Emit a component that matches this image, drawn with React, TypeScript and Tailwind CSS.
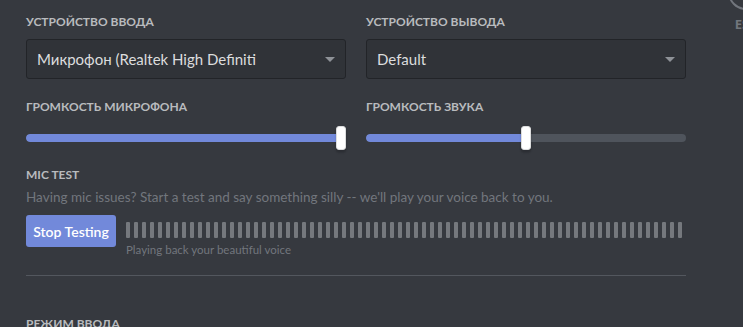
import React from "react";

const font = { fontFamily: "Lato, 'Noto Sans', sans-serif" };

function Label({ children }: { children: React.ReactNode }) {
  return (
    <div className="text-[12px] leading-[16px] font-bold uppercase text-[#b9bbbe]">
      {children}
    </div>
  );
}

function Select({ value }: { value: string }) {
  return (
    <div className="mt-[9px] h-[40px] w-[320px] rounded-[3px] border border-[#222428] bg-[#303338] flex items-center pl-[10px] pr-[10px]">
      <span className="flex-1 truncate text-[15px] text-[#dcddde]">{value}</span>
      <svg width="10" height="5" viewBox="0 0 10 5" className="shrink-0">
        <polygon points="0,0 10,0 5,5" fill="#8e9297" />
      </svg>
    </div>
  );
}

function Slider({ pct }: { pct: number }) {
  return (
    <div className="mt-[11px] relative h-[24px] w-[320px] flex items-center">
      <div className="h-[8px] w-full rounded-full bg-[#4f545c] overflow-hidden">
        <div className="h-full bg-[#7289da] rounded-full" style={{ width: `${pct * 310 + 5}px` }} />
      </div>
      <div
        className="absolute top-0 h-[24px] w-[10px] rounded-[3px] bg-white border border-[#dcddde] shadow-[0_3px_1px_0_rgba(0,0,0,0.05),0_2px_2px_0_rgba(0,0,0,0.1),0_3px_3px_0_rgba(0,0,0,0.05)]"
        style={{ left: `${pct * 310}px` }}
      />
    </div>
  );
}

export default function App() {
  const bars = Array.from({ length: 70 });
  return (
    <div className="w-[743px] h-[327px] overflow-hidden bg-[#36393f] flex" style={font}>
      <div className="pl-[26px] pt-[14px] w-[686px] shrink-0 flex flex-col">
        <div className="flex gap-5">
          <div className="w-[320px]">
            <Label>Устройство ввода</Label>
            <Select value="Микрофон (Realtek High Definiti" />
          </div>
          <div className="w-[320px]">
            <Label>Устройство вывода</Label>
            <Select value="Default" />
          </div>
        </div>
        <div className="flex gap-5 mt-5">
          <div className="w-[320px]">
            <Label>Громкость микрофона</Label>
            <Slider pct={1} />
          </div>
          <div className="w-[320px]">
            <Label>Громкость звука</Label>
            <Slider pct={0.5} />
          </div>
        </div>
        <div className="mt-[17px]">
          <Label>Mic Test</Label>
        </div>
        <div className="mt-[4px] text-[13.5px] leading-[20px] text-[#72767d]">
          Having mic issues? Start a test and say something silly -- we'll play your voice back to you.
        </div>
        <div className="mt-[8px] flex items-start gap-[10px]">
          <button className="h-[32px] w-[90px] rounded-[3px] bg-[#7289da] text-white text-[14px] font-semibold">
            Stop Testing
          </button>
          <div className="flex flex-col mt-[7px]">
            <div className="flex gap-[4px] h-[16px]">
              {bars.map((_, i) => (
                <div key={i} className="w-[4px] h-[16px] rounded-[1px] bg-[#75787d]" />
              ))}
            </div>
            <div className="mt-[5px] text-[11.5px] leading-[14px] text-[#72767d]">
              Playing back your beautiful voice
            </div>
          </div>
        </div>
        <div className="mt-[18px] w-[660px] border-t border-[#53575e]" />
        <div className="mt-[40px]">
          <Label>Режим ввода</Label>
        </div>
      </div>
      <div
        className="ml-[42px] -mt-[26px] w-[36px] shrink-0 flex flex-col items-center"
        style={{ fontFamily: "'Open Sans', sans-serif" }}
      >
        <div className="h-[36px] w-[36px] shrink-0 rounded-full border-2 border-[#72767d]" />
        <div className="mt-[6px] text-[13px] leading-[16px] font-bold text-[#72767d]">ESC</div>
      </div>
    </div>
  );
}
